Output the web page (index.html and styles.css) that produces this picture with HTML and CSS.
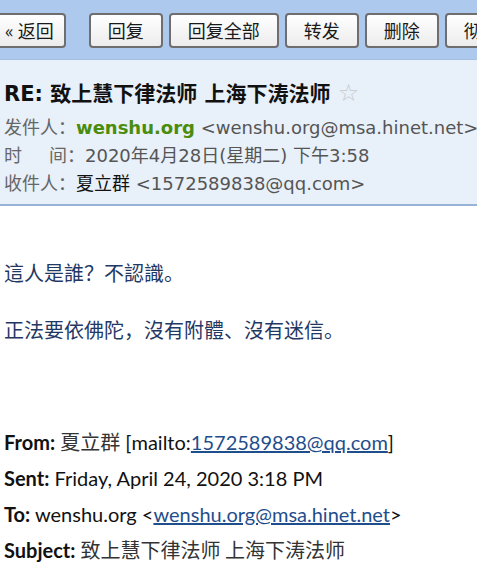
FILE: index.html
```html
<!DOCTYPE html>
<html lang="zh-CN">
<head>
    <meta charset="UTF-8">
    <meta name="viewport" content="width=device-width, initial-scale=1.0">
    <title>RE: 致上慧下律法师 上海下涛法师</title>
    <link rel="stylesheet" href="styles.css">
</head>
<body>

    <div class="toolbar">
        <button class="btn btn-back">« 返回</button>
        <span class="sep"></span>
        <button class="btn">回复</button>
        <button class="btn">回复全部</button>
        <button class="btn">转发</button>
        <button class="btn">删除</button>
        <button class="btn">彻底删除</button>
    </div>

    <div class="mail-head">
        <div class="subject">RE: 致上慧下律法师 上海下涛法师 <span class="star">☆</span></div>
        <div class="row"><span class="label">发件人：</span><b class="sender">wenshu.org</b> <span class="addr">&lt;wenshu.org@msa.hinet.net&gt;</span></div>
        <div class="row"><span class="label">时<span class="gap"></span>间：</span><span class="addr">2020年4月28日(星期二) 下午3:58</span></div>
        <div class="row"><span class="label">收件人：</span><span class="name">夏立群</span> <span class="addr">&lt;1572589838@qq.com&gt;</span></div>
    </div>

    <div class="mail-body">
        <p class="reply">這人是誰？不認識。</p>
        <p class="reply">正法要依佛陀，沒有附體、沒有迷信。</p>

        <div class="quote">
            <div><b>From:</b> <span class="cjk">夏立群</span> [mailto:<a href="#">1572589838@qq.com</a>]</div>
            <div><b>Sent:</b> Friday, April 24, 2020 3:18 PM</div>
            <div><b>To:</b> wenshu.org &lt;<a href="#">wenshu.org@msa.hinet.net</a>&gt;</div>
            <div><b>Subject:</b> <span class="cjk">致上慧下律法师 上海下涛法师</span></div>
        </div>
    </div>

</body>
</html>
```

FILE: styles.css
```css
body {
    margin: 0;
    font-family: "DejaVu Sans", "Noto Sans CJK SC", sans-serif;
    background-color: #fff;
    overflow: hidden;
}
.toolbar {
    display: flex;
    align-items: center;
    gap: 6px;
    height: 60px;
    padding-top: 1px;
    background-color: #adc9ee;
    white-space: nowrap;
    box-sizing: border-box;
    border-bottom: 1px solid #a7c0e2;
}
.btn {
    flex-shrink: 0;
    height: 35px;
    padding: 0 17px;
    font-family: "Noto Sans CJK SC", "DejaVu Sans", sans-serif;
    font-size: 18px;
    color: #1a1a1a;
    background: linear-gradient(#ffffff, #ececec);
    border: 2px solid #6e6e6e;
    border-radius: 4px;
}
.btn-back {
    margin-left: -11px;
    padding: 0 10px 0 14px;
}
.sep {
    width: 2px;
    height: 26px;
    margin: 0 5px 0 6px;
    background-color: #d6dde6;
}
.mail-head {
    background-color: #e8f0f9;
    border-bottom: 2px solid #98b3d8;
    padding: 16px 4px 6px;
}
.subject {
    font-size: 21px;
    font-weight: bold;
    color: #111;
    line-height: 34px;
    margin-bottom: 3px;
    white-space: nowrap;
}
.star {
    font-weight: normal;
    font-size: 24px;
    color: #c8c8c8;
}
.row {
    font-size: 18px;
    line-height: 28px;
    color: #555;
    white-space: nowrap;
}
.label {
    color: #666;
}
.gap {
    display: inline-block;
    width: 27px;
}
.sender {
    color: #4a8c0c;
}
.name {
    color: #111;
}
.mail-body {
    padding: 0 4px;
}
.reply {
    font-family: "Noto Sans CJK TC", sans-serif;
    font-size: 20px;
    color: #1f3864;
    margin: 0;
    line-height: 28px;
}
.reply:first-child {
    margin-top: 53px;
}
.reply + .reply {
    margin-top: 29px;
}
.quote {
    margin-top: 80px;
    font-family: Lato, "Noto Sans CJK SC", sans-serif;
    font-size: 20px;
    line-height: 36px;
    color: #111;
    white-space: nowrap;
}
.quote a {
    color: #1f4e8c;
}
.cjk {
    font-family: "Noto Sans CJK SC", sans-serif;
    color: #333;
}
```
